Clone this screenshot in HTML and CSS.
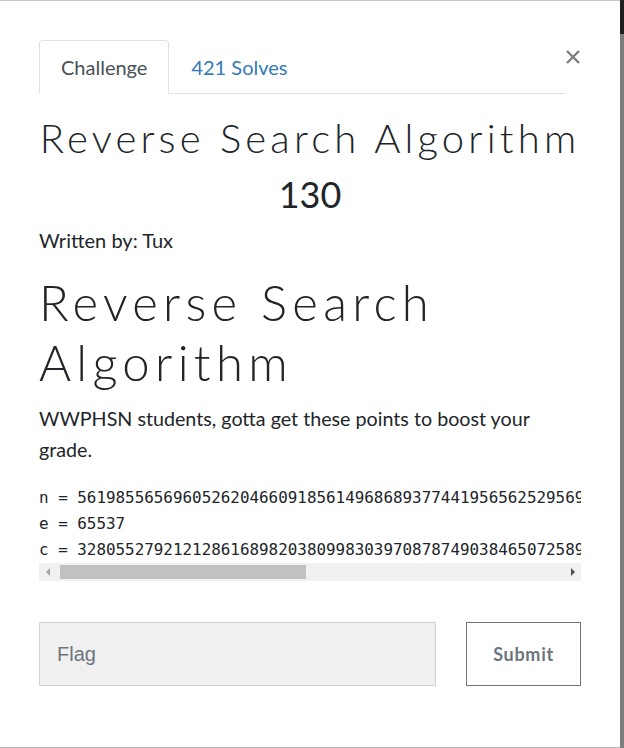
FILE: index.html
```html
<!DOCTYPE html>
<html lang="en">
<head>
<meta charset="utf-8">
<title>Reverse Search Algorithm</title>
<link rel="stylesheet" href="styles.css">
</head>
<body>
<div class="screen">
  <div class="modal">
    <div class="tabs-row">
      <ul class="nav">
        <li class="tab active">Challenge</li>
        <li class="tab link">421 Solves</li>
      </ul>
      <button class="close" aria-label="Close">
        <svg width="16" height="16" viewBox="0 0 16 16"><path d="M2 2 L14 14 M14 2 L2 14" stroke="#7b7b7b" stroke-width="2.3" fill="none"/></svg>
      </button>
    </div>
    <h3 class="name">Reverse Search Algorithm</h3>
    <h4 class="value">130</h4>
    <span class="author">Written by: Tux</span>
    <div class="desc">
      <h1 class="desc-title">Reverse Search Algorithm</h1>
      <p class="desc-text">WWPHSN students, gotta get these points to boost your grade.</p>
      <pre class="code">n = 56198556569605262046609185614968689377441956562529569
e = 65537
c = 32805527921212861689820380998303970878749038465072589</pre>
      <div class="hscroll">
        <div class="arrow left"></div>
        <div class="track"><div class="thumb"></div></div>
        <div class="arrow right"></div>
      </div>
    </div>
    <form class="submit-row">
      <input class="flag" type="text" placeholder="Flag">
      <button class="submit" type="button">Submit</button>
    </form>
  </div>
  <div class="edge"></div>
</div>
</body>
</html>
```
FILE: styles.css
```css
* { box-sizing: border-box; }
html, body { margin: 0; padding: 0; }
body {
  width: 624px;
  height: 748px;
  overflow: hidden;
  background: #7a7a7a;
  font-family: "Lato", "Open Sans", sans-serif;
  color: #212529;
}
.screen {
  display: flex;
  height: 748px;
}
.modal {
  flex: 1;
  min-width: 0;
  background: #fff;
  border-top: 1px solid #c8c8c8;
  border-bottom: 1px solid #b3bab3;
  padding: 39px 39px 0 39px;
}
.edge {
  flex: 0 0 4px;
  background: linear-gradient(#1f1f1f 0, #1f1f1f 34px, #7d7d7d 34px, #7d7d7d 100%);
}
.tabs-row {
  display: flex;
  align-items: flex-start;
}
.nav {
  flex: 1;
  display: flex;
  list-style: none;
  margin: 0;
  padding: 0;
  border-bottom: 1px solid #dee2e6;
}
.tab {
  font-size: 20px;
  line-height: 28px;
  padding: 12px 21px 12px 21px;
  border: 1px solid transparent;
  border-top-left-radius: 4px;
  border-top-right-radius: 4px;
  margin-bottom: -1px;
}
.tab.active {
  color: #495057;
  border-color: #dee2e6 #dee2e6 #fff;
  background: #fff;
}
.tab.link {
  color: #337ab7;
}
.close {
  margin: 9px 0 0 0;
  padding: 0;
  width: 16px;
  height: 16px;
  border: 0;
  background: none;
  display: flex;
}
.name {
  margin: 20px 0 0 0;
  text-align: center;
  font-weight: 300;
  font-size: 40px;
  line-height: 48px;
  letter-spacing: 4.2px;
  white-space: nowrap;
}
.value {
  margin: 11px 0 0 0;
  text-align: center;
  font-weight: 400;
  font-size: 36px;
  line-height: 43px;
}
.author {
  display: block;
  margin-top: 10px;
  font-size: 20px;
  line-height: 28px;
}
.desc-title {
  margin: 18px 0 0 0;
  font-weight: 300;
  font-size: 49px;
  line-height: 60px;
  letter-spacing: 5.3px;
}
.desc-text {
  margin: 11px 0 0 0;
  font-size: 19.7px;
  line-height: 31px;
}
.code {
  margin: 20px 0 0 0;
  font-family: "DejaVu Sans Mono", "Liberation Mono", monospace;
  font-size: 15.9px;
  line-height: 26px;
  color: #212529;
  white-space: pre;
  overflow: hidden;
}
.hscroll {
  display: flex;
  height: 18px;
  background: #f1f1f1;
}
.arrow {
  width: 17px;
  display: flex;
  align-items: center;
  justify-content: center;
}
.arrow::before {
  content: "";
  width: 0;
  height: 0;
  border-top: 4px solid transparent;
  border-bottom: 4px solid transparent;
}
.arrow.left::before { border-right: 4px solid #a3a3a3; }
.arrow.right::before { border-left: 4px solid #505050; }
.track {
  flex: 1;
  padding: 2px 0 2px 4px;
}
.thumb {
  width: 246px;
  height: 100%;
  background: #c1c1c1;
}
.submit-row {
  display: flex;
  gap: 30px;
  margin-top: 41px;
}
.flag {
  width: 397px;
  height: 64px;
  border: 1px solid #ced4da;
  background: #f0f0f0;
  padding: 0 17px;
  font-family: "Liberation Sans", Arial, sans-serif;
  font-size: 20px;
  color: #495057;
  outline: none;
}
.flag::placeholder { color: #6c757d; }
.submit {
  flex: 1;
  height: 64px;
  border: 1px solid #6c757d;
  background: #fff;
  color: #6c757d;
  font-family: "Lato", sans-serif;
  font-weight: 700;
  font-size: 18px;
  letter-spacing: 0.7px;
}
```
